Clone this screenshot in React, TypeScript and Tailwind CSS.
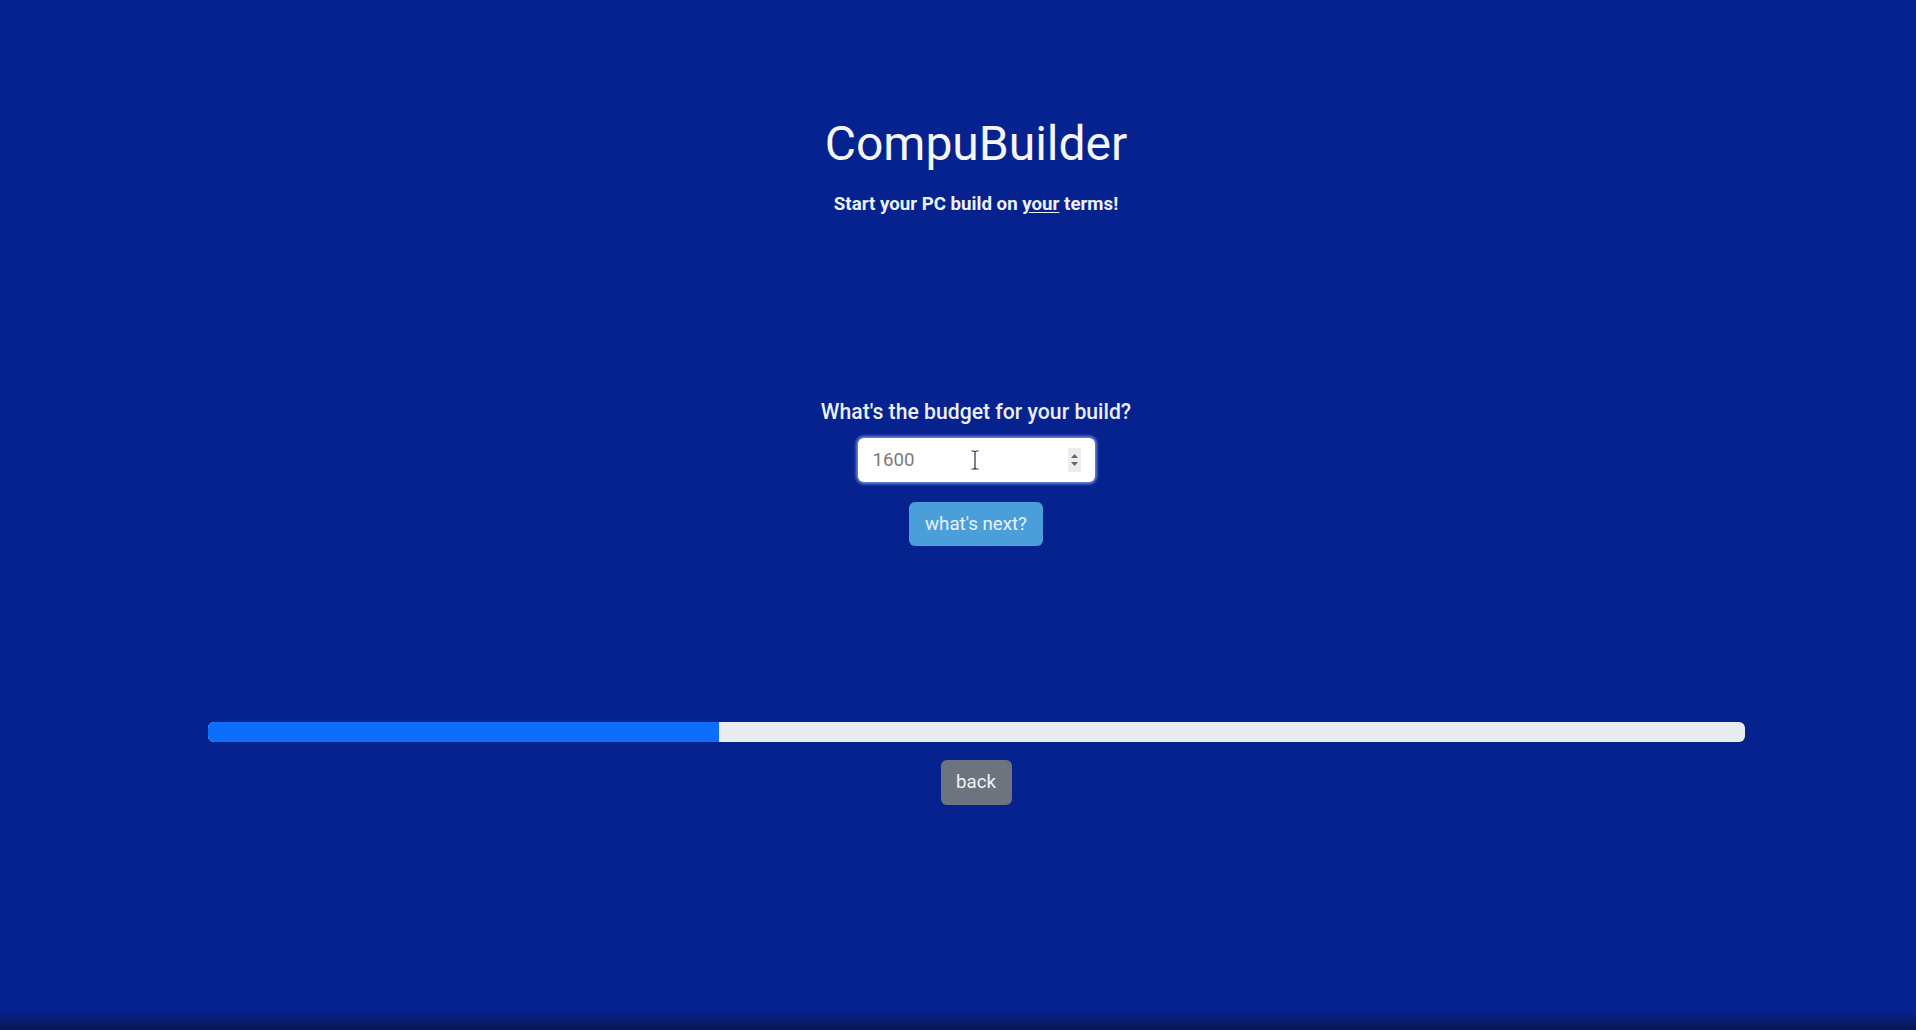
import React from "react";

export default function App() {
  return (
    <div
      className="relative w-full h-[1030px] bg-[#05228e] overflow-hidden text-white"
      style={{ fontFamily: "Roboto, 'Liberation Sans', sans-serif" }}
    >
      <div className="ml-[36px] flex flex-col items-center">
        <h1 className="mt-[115px] text-[48px] leading-[58px] font-normal text-[#f4f6fb]">CompuBuilder</h1>
        <p className="mt-[18px] text-[18.7px] leading-[26px] font-bold text-[#eef1f8]">
          Start your PC build on <span className="underline underline-offset-2">your</span> terms!
        </p>

        <p className="mt-[180px] text-[21.2px] leading-[30px] font-medium text-[#eceff8]">What's the budget for your build?</p>
        <div className="relative mt-[11px] w-[237px] h-[44px] rounded-[6px] bg-white shadow-[0_0_3px_2px_rgba(150,180,255,0.7)] flex items-center">
          <span className="ml-[15px] text-[18.7px] text-[#7a7a7a]">1600</span>
          <div className="absolute right-[14px] top-[10px] w-[13px] h-[24px] bg-[#ededed] flex flex-col items-center justify-center gap-[4px]">
            <svg width="7" height="4" viewBox="0 0 7 4"><path d="M0 4 L3.5 0 L7 4 Z" fill="#666" /></svg>
            <svg width="7" height="4" viewBox="0 0 7 4"><path d="M0 0 L3.5 4 L7 0 Z" fill="#666" /></svg>
          </div>
          <svg className="absolute left-[112px] top-[12px]" width="10" height="20" viewBox="0 0 10 20">
            <path d="M1.5 1 H3.5 Q5 1 5 2.5 Q5 1 6.5 1 H8.5 M5 2.5 V17.5 M1.5 19 H3.5 Q5 19 5 17.5 Q5 19 6.5 19 H8.5" stroke="#333" strokeWidth="1.2" fill="none" />
          </svg>
        </div>
        <button className="mt-[20px] w-[134px] h-[44px] rounded-[6px] bg-[#4a9fdb] text-[18.7px] text-[#e9f2fb]">what's next?</button>

        <div className="mt-[176px] w-[1537px] h-[20px] rounded-[6px] bg-[#e9ecef] overflow-hidden flex">
          <div className="h-full bg-[#0d6efd]" style={{ width: "33.3%" }} />
        </div>
        <button className="mt-[18px] w-[71px] h-[45px] rounded-[6px] bg-[#6c757d] text-[18.7px] text-[#f2f3f4]">back</button>
      </div>
      <div className="absolute left-0 right-0 bottom-0 h-[18px] bg-gradient-to-b from-[#05228e] to-[#071652]" />
    </div>
  );
}
